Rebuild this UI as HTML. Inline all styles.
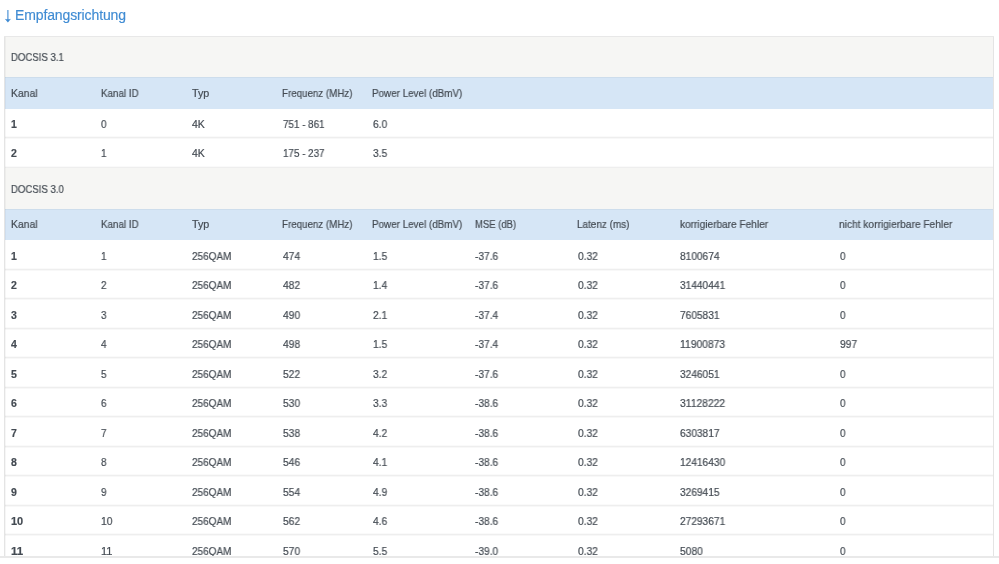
<!DOCTYPE html>
<html><head><meta charset="utf-8"><style>
html,body{margin:0;padding:0;background:#fff;width:999px;height:564px;overflow:hidden;}
body{position:relative;font-family:"Liberation Sans",sans-serif;}
.t{position:absolute;height:20px;line-height:20px;font-size:10.5px;color:#444b53;white-space:nowrap;will-change:transform;-webkit-text-stroke:0.2px #444b53;}
.title{position:absolute;left:14.6px;top:4.6px;font-size:14px;color:#3f8bd3;line-height:20px;white-space:nowrap;letter-spacing:-0.121px;will-change:transform;-webkit-text-stroke:0.15px #3f8bd3;}
</style></head><body>
<svg style="position:absolute;left:0;top:0" width="20" height="30" viewBox="0 0 20 30"><path d="M7.9 10 V20" stroke="#3f8bd3" stroke-width="1.1" fill="none"/><path d="M4.8 18.7 Q7.9 19.9 11 18.7 L7.9 22.5 Z" fill="#3f8bd3"/></svg>
<div class="title">Empfangsrichtung</div>
<div style="position:absolute;left:4px;top:36.00px;width:990px;height:41.4px;background:#f6f6f4;"></div>
<div style="position:absolute;left:4px;top:77.40px;width:990px;height:31.3px;background:#d6e6f6;"></div>
<div style="position:absolute;left:4px;top:76.90px;width:990px;height:1px;background:rgba(0,0,0,0.04);"></div>
<div style="position:absolute;left:4px;top:136.00px;width:990px;height:1px;background:#fafafa;"></div>
<div style="position:absolute;left:4px;top:137.00px;width:990px;height:1px;background:#eeeeee;"></div>
<div style="position:absolute;left:4px;top:138.00px;width:990px;height:1px;background:#f8f8f8;"></div>
<div style="position:absolute;left:4px;top:166.00px;width:990px;height:1px;background:#fafafa;"></div>
<div style="position:absolute;left:4px;top:167.00px;width:990px;height:1px;background:#eeeeee;"></div>
<div style="position:absolute;left:4px;top:168.00px;width:990px;height:1px;background:#f8f8f8;"></div>
<div style="position:absolute;left:4px;top:167.70px;width:990px;height:41.4px;background:#f6f6f4;"></div>
<div style="position:absolute;left:4px;top:209.10px;width:990px;height:31.3px;background:#d6e6f6;"></div>
<div style="position:absolute;left:4px;top:208.60px;width:990px;height:1px;background:rgba(0,0,0,0.04);"></div>
<div style="position:absolute;left:4px;top:268.00px;width:990px;height:1px;background:#fafafa;"></div>
<div style="position:absolute;left:4px;top:269.00px;width:990px;height:1px;background:#eeeeee;"></div>
<div style="position:absolute;left:4px;top:270.00px;width:990px;height:1px;background:#f8f8f8;"></div>
<div style="position:absolute;left:4px;top:297.00px;width:990px;height:1px;background:#fafafa;"></div>
<div style="position:absolute;left:4px;top:298.00px;width:990px;height:1px;background:#eeeeee;"></div>
<div style="position:absolute;left:4px;top:299.00px;width:990px;height:1px;background:#f8f8f8;"></div>
<div style="position:absolute;left:4px;top:327.00px;width:990px;height:1px;background:#fafafa;"></div>
<div style="position:absolute;left:4px;top:328.00px;width:990px;height:1px;background:#eeeeee;"></div>
<div style="position:absolute;left:4px;top:329.00px;width:990px;height:1px;background:#f8f8f8;"></div>
<div style="position:absolute;left:4px;top:356.00px;width:990px;height:1px;background:#fafafa;"></div>
<div style="position:absolute;left:4px;top:357.00px;width:990px;height:1px;background:#eeeeee;"></div>
<div style="position:absolute;left:4px;top:358.00px;width:990px;height:1px;background:#f8f8f8;"></div>
<div style="position:absolute;left:4px;top:386.00px;width:990px;height:1px;background:#fafafa;"></div>
<div style="position:absolute;left:4px;top:387.00px;width:990px;height:1px;background:#eeeeee;"></div>
<div style="position:absolute;left:4px;top:388.00px;width:990px;height:1px;background:#f8f8f8;"></div>
<div style="position:absolute;left:4px;top:415.00px;width:990px;height:1px;background:#fafafa;"></div>
<div style="position:absolute;left:4px;top:416.00px;width:990px;height:1px;background:#eeeeee;"></div>
<div style="position:absolute;left:4px;top:417.00px;width:990px;height:1px;background:#f8f8f8;"></div>
<div style="position:absolute;left:4px;top:445.00px;width:990px;height:1px;background:#fafafa;"></div>
<div style="position:absolute;left:4px;top:446.00px;width:990px;height:1px;background:#eeeeee;"></div>
<div style="position:absolute;left:4px;top:447.00px;width:990px;height:1px;background:#f8f8f8;"></div>
<div style="position:absolute;left:4px;top:474.00px;width:990px;height:1px;background:#fafafa;"></div>
<div style="position:absolute;left:4px;top:475.00px;width:990px;height:1px;background:#eeeeee;"></div>
<div style="position:absolute;left:4px;top:476.00px;width:990px;height:1px;background:#f8f8f8;"></div>
<div style="position:absolute;left:4px;top:504.00px;width:990px;height:1px;background:#fafafa;"></div>
<div style="position:absolute;left:4px;top:505.00px;width:990px;height:1px;background:#eeeeee;"></div>
<div style="position:absolute;left:4px;top:506.00px;width:990px;height:1px;background:#f8f8f8;"></div>
<div style="position:absolute;left:4px;top:533.00px;width:990px;height:1px;background:#fafafa;"></div>
<div style="position:absolute;left:4px;top:534.00px;width:990px;height:1px;background:#eeeeee;"></div>
<div style="position:absolute;left:4px;top:535.00px;width:990px;height:1px;background:#f8f8f8;"></div>
<div style="position:absolute;left:4px;top:563.00px;width:990px;height:1px;background:#fafafa;"></div>
<div style="position:absolute;left:4px;top:564.00px;width:990px;height:1px;background:#eeeeee;"></div>
<div style="position:absolute;left:4px;top:565.00px;width:990px;height:1px;background:#f8f8f8;"></div>
<div class="t" style="left:10.50px;top:46.80px;transform:scaleX(0.9140);transform-origin:0 0">DOCSIS 3.1</div>
<div class="t" style="left:10.50px;top:82.65px;transform:scaleX(0.9874);transform-origin:0 0">Kanal</div>
<div class="t" style="left:100.50px;top:82.65px;transform:scaleX(0.9336);transform-origin:0 0">Kanal ID</div>
<div class="t" style="left:191.50px;top:82.65px;transform:scaleX(1.0234);transform-origin:0 0">Typ</div>
<div class="t" style="left:281.60px;top:82.65px;transform:scaleX(0.9294);transform-origin:0 0">Frequenz (MHz)</div>
<div class="t" style="left:372.10px;top:82.65px;transform:scaleX(0.9383);transform-origin:0 0">Power Level (dBmV)</div>
<div class="t" style="left:10.50px;top:113.85px;font-weight:bold;-webkit-text-stroke:0.18px #444b53;transform:scaleX(1.0019);transform-origin:0 0">1</div>
<div class="t" style="left:100.50px;top:113.85px;transform:scaleX(0.9458);transform-origin:0 0">0</div>
<div class="t" style="left:191.50px;top:113.85px;transform:scaleX(0.9953);transform-origin:0 0">4K</div>
<div class="t" style="left:282.50px;top:113.85px;transform:scaleX(0.9360);transform-origin:0 0">751 - 861</div>
<div class="t" style="left:372.50px;top:113.85px;transform:scaleX(0.9716);transform-origin:0 0">6.0</div>
<div class="t" style="left:10.50px;top:143.35px;font-weight:bold;-webkit-text-stroke:0.18px #444b53;transform:scaleX(1.0019);transform-origin:0 0">2</div>
<div class="t" style="left:100.50px;top:143.35px;transform:scaleX(0.9458);transform-origin:0 0">1</div>
<div class="t" style="left:191.50px;top:143.35px;transform:scaleX(0.9953);transform-origin:0 0">4K</div>
<div class="t" style="left:282.50px;top:143.35px;transform:scaleX(0.9360);transform-origin:0 0">175 - 237</div>
<div class="t" style="left:372.50px;top:143.35px;transform:scaleX(0.9716);transform-origin:0 0">3.5</div>
<div class="t" style="left:10.50px;top:178.50px;transform:scaleX(0.9140);transform-origin:0 0">DOCSIS 3.0</div>
<div class="t" style="left:10.50px;top:214.35px;transform:scaleX(0.9874);transform-origin:0 0">Kanal</div>
<div class="t" style="left:100.50px;top:214.35px;transform:scaleX(0.9336);transform-origin:0 0">Kanal ID</div>
<div class="t" style="left:191.50px;top:214.35px;transform:scaleX(1.0234);transform-origin:0 0">Typ</div>
<div class="t" style="left:281.60px;top:214.35px;transform:scaleX(0.9294);transform-origin:0 0">Frequenz (MHz)</div>
<div class="t" style="left:372.10px;top:214.35px;transform:scaleX(0.9383);transform-origin:0 0">Power Level (dBmV)</div>
<div class="t" style="left:474.50px;top:214.35px;transform:scaleX(0.9022);transform-origin:0 0">MSE (dB)</div>
<div class="t" style="left:576.60px;top:214.35px;transform:scaleX(0.9457);transform-origin:0 0">Latenz (ms)</div>
<div class="t" style="left:679.50px;top:214.35px;transform:scaleX(0.9621);transform-origin:0 0">korrigierbare Fehler</div>
<div class="t" style="left:839.20px;top:214.35px;transform:scaleX(0.9704);transform-origin:0 0">nicht korrigierbare Fehler</div>
<div class="t" style="left:10.50px;top:245.55px;font-weight:bold;-webkit-text-stroke:0.18px #444b53;transform:scaleX(1.0019);transform-origin:0 0">1</div>
<div class="t" style="left:100.50px;top:245.55px;transform:scaleX(0.9458);transform-origin:0 0">1</div>
<div class="t" style="left:191.50px;top:245.55px;transform:scaleX(0.9492);transform-origin:0 0">256QAM</div>
<div class="t" style="left:282.50px;top:245.55px;transform:scaleX(0.9734);transform-origin:0 0">474</div>
<div class="t" style="left:372.50px;top:245.55px;transform:scaleX(0.9716);transform-origin:0 0">1.5</div>
<div class="t" style="left:474.50px;top:245.55px;transform:scaleX(0.9691);transform-origin:0 0">-37.6</div>
<div class="t" style="left:577.50px;top:245.55px;transform:scaleX(0.9730);transform-origin:0 0">0.32</div>
<div class="t" style="left:679.50px;top:245.55px;transform:scaleX(0.9675);transform-origin:0 0">8100674</div>
<div class="t" style="left:839.50px;top:245.55px;transform:scaleX(0.9458);transform-origin:0 0">0</div>
<div class="t" style="left:10.50px;top:275.05px;font-weight:bold;-webkit-text-stroke:0.18px #444b53;transform:scaleX(1.0019);transform-origin:0 0">2</div>
<div class="t" style="left:100.50px;top:275.05px;transform:scaleX(0.9458);transform-origin:0 0">2</div>
<div class="t" style="left:191.50px;top:275.05px;transform:scaleX(0.9492);transform-origin:0 0">256QAM</div>
<div class="t" style="left:282.50px;top:275.05px;transform:scaleX(0.9734);transform-origin:0 0">482</div>
<div class="t" style="left:372.50px;top:275.05px;transform:scaleX(0.9716);transform-origin:0 0">1.4</div>
<div class="t" style="left:474.50px;top:275.05px;transform:scaleX(0.9691);transform-origin:0 0">-37.6</div>
<div class="t" style="left:577.50px;top:275.05px;transform:scaleX(0.9730);transform-origin:0 0">0.32</div>
<div class="t" style="left:679.50px;top:275.05px;transform:scaleX(0.9660);transform-origin:0 0">31440441</div>
<div class="t" style="left:839.50px;top:275.05px;transform:scaleX(0.9458);transform-origin:0 0">0</div>
<div class="t" style="left:10.50px;top:304.55px;font-weight:bold;-webkit-text-stroke:0.18px #444b53;transform:scaleX(1.0019);transform-origin:0 0">3</div>
<div class="t" style="left:100.50px;top:304.55px;transform:scaleX(0.9458);transform-origin:0 0">3</div>
<div class="t" style="left:191.50px;top:304.55px;transform:scaleX(0.9492);transform-origin:0 0">256QAM</div>
<div class="t" style="left:282.50px;top:304.55px;transform:scaleX(0.9734);transform-origin:0 0">490</div>
<div class="t" style="left:372.50px;top:304.55px;transform:scaleX(0.9716);transform-origin:0 0">2.1</div>
<div class="t" style="left:474.50px;top:304.55px;transform:scaleX(0.9691);transform-origin:0 0">-37.4</div>
<div class="t" style="left:577.50px;top:304.55px;transform:scaleX(0.9730);transform-origin:0 0">0.32</div>
<div class="t" style="left:679.50px;top:304.55px;transform:scaleX(0.9675);transform-origin:0 0">7605831</div>
<div class="t" style="left:839.50px;top:304.55px;transform:scaleX(0.9458);transform-origin:0 0">0</div>
<div class="t" style="left:10.50px;top:334.05px;font-weight:bold;-webkit-text-stroke:0.18px #444b53;transform:scaleX(1.0019);transform-origin:0 0">4</div>
<div class="t" style="left:100.50px;top:334.05px;transform:scaleX(0.9458);transform-origin:0 0">4</div>
<div class="t" style="left:191.50px;top:334.05px;transform:scaleX(0.9492);transform-origin:0 0">256QAM</div>
<div class="t" style="left:282.50px;top:334.05px;transform:scaleX(0.9734);transform-origin:0 0">498</div>
<div class="t" style="left:372.50px;top:334.05px;transform:scaleX(0.9716);transform-origin:0 0">1.5</div>
<div class="t" style="left:474.50px;top:334.05px;transform:scaleX(0.9691);transform-origin:0 0">-37.4</div>
<div class="t" style="left:577.50px;top:334.05px;transform:scaleX(0.9730);transform-origin:0 0">0.32</div>
<div class="t" style="left:679.50px;top:334.05px;transform:scaleX(0.9825);transform-origin:0 0">11900873</div>
<div class="t" style="left:839.50px;top:334.05px;transform:scaleX(0.9734);transform-origin:0 0">997</div>
<div class="t" style="left:10.50px;top:363.55px;font-weight:bold;-webkit-text-stroke:0.18px #444b53;transform:scaleX(1.0019);transform-origin:0 0">5</div>
<div class="t" style="left:100.50px;top:363.55px;transform:scaleX(0.9458);transform-origin:0 0">5</div>
<div class="t" style="left:191.50px;top:363.55px;transform:scaleX(0.9492);transform-origin:0 0">256QAM</div>
<div class="t" style="left:282.50px;top:363.55px;transform:scaleX(0.9734);transform-origin:0 0">522</div>
<div class="t" style="left:372.50px;top:363.55px;transform:scaleX(0.9716);transform-origin:0 0">3.2</div>
<div class="t" style="left:474.50px;top:363.55px;transform:scaleX(0.9691);transform-origin:0 0">-37.6</div>
<div class="t" style="left:577.50px;top:363.55px;transform:scaleX(0.9730);transform-origin:0 0">0.32</div>
<div class="t" style="left:679.50px;top:363.55px;transform:scaleX(0.9675);transform-origin:0 0">3246051</div>
<div class="t" style="left:839.50px;top:363.55px;transform:scaleX(0.9458);transform-origin:0 0">0</div>
<div class="t" style="left:10.50px;top:393.05px;font-weight:bold;-webkit-text-stroke:0.18px #444b53;transform:scaleX(1.0019);transform-origin:0 0">6</div>
<div class="t" style="left:100.50px;top:393.05px;transform:scaleX(0.9458);transform-origin:0 0">6</div>
<div class="t" style="left:191.50px;top:393.05px;transform:scaleX(0.9492);transform-origin:0 0">256QAM</div>
<div class="t" style="left:282.50px;top:393.05px;transform:scaleX(0.9734);transform-origin:0 0">530</div>
<div class="t" style="left:372.50px;top:393.05px;transform:scaleX(0.9716);transform-origin:0 0">3.3</div>
<div class="t" style="left:474.50px;top:393.05px;transform:scaleX(0.9691);transform-origin:0 0">-38.6</div>
<div class="t" style="left:577.50px;top:393.05px;transform:scaleX(0.9730);transform-origin:0 0">0.32</div>
<div class="t" style="left:679.50px;top:393.05px;transform:scaleX(0.9825);transform-origin:0 0">31128222</div>
<div class="t" style="left:839.50px;top:393.05px;transform:scaleX(0.9458);transform-origin:0 0">0</div>
<div class="t" style="left:10.50px;top:422.55px;font-weight:bold;-webkit-text-stroke:0.18px #444b53;transform:scaleX(1.0019);transform-origin:0 0">7</div>
<div class="t" style="left:100.50px;top:422.55px;transform:scaleX(0.9458);transform-origin:0 0">7</div>
<div class="t" style="left:191.50px;top:422.55px;transform:scaleX(0.9492);transform-origin:0 0">256QAM</div>
<div class="t" style="left:282.50px;top:422.55px;transform:scaleX(0.9734);transform-origin:0 0">538</div>
<div class="t" style="left:372.50px;top:422.55px;transform:scaleX(0.9716);transform-origin:0 0">4.2</div>
<div class="t" style="left:474.50px;top:422.55px;transform:scaleX(0.9691);transform-origin:0 0">-38.6</div>
<div class="t" style="left:577.50px;top:422.55px;transform:scaleX(0.9730);transform-origin:0 0">0.32</div>
<div class="t" style="left:679.50px;top:422.55px;transform:scaleX(0.9675);transform-origin:0 0">6303817</div>
<div class="t" style="left:839.50px;top:422.55px;transform:scaleX(0.9458);transform-origin:0 0">0</div>
<div class="t" style="left:10.50px;top:452.05px;font-weight:bold;-webkit-text-stroke:0.18px #444b53;transform:scaleX(1.0019);transform-origin:0 0">8</div>
<div class="t" style="left:100.50px;top:452.05px;transform:scaleX(0.9458);transform-origin:0 0">8</div>
<div class="t" style="left:191.50px;top:452.05px;transform:scaleX(0.9492);transform-origin:0 0">256QAM</div>
<div class="t" style="left:282.50px;top:452.05px;transform:scaleX(0.9734);transform-origin:0 0">546</div>
<div class="t" style="left:372.50px;top:452.05px;transform:scaleX(0.9716);transform-origin:0 0">4.1</div>
<div class="t" style="left:474.50px;top:452.05px;transform:scaleX(0.9691);transform-origin:0 0">-38.6</div>
<div class="t" style="left:577.50px;top:452.05px;transform:scaleX(0.9730);transform-origin:0 0">0.32</div>
<div class="t" style="left:679.50px;top:452.05px;transform:scaleX(0.9660);transform-origin:0 0">12416430</div>
<div class="t" style="left:839.50px;top:452.05px;transform:scaleX(0.9458);transform-origin:0 0">0</div>
<div class="t" style="left:10.50px;top:481.55px;font-weight:bold;-webkit-text-stroke:0.18px #444b53;transform:scaleX(1.0019);transform-origin:0 0">9</div>
<div class="t" style="left:100.50px;top:481.55px;transform:scaleX(0.9458);transform-origin:0 0">9</div>
<div class="t" style="left:191.50px;top:481.55px;transform:scaleX(0.9492);transform-origin:0 0">256QAM</div>
<div class="t" style="left:282.50px;top:481.55px;transform:scaleX(0.9734);transform-origin:0 0">554</div>
<div class="t" style="left:372.50px;top:481.55px;transform:scaleX(0.9716);transform-origin:0 0">4.9</div>
<div class="t" style="left:474.50px;top:481.55px;transform:scaleX(0.9691);transform-origin:0 0">-38.6</div>
<div class="t" style="left:577.50px;top:481.55px;transform:scaleX(0.9730);transform-origin:0 0">0.32</div>
<div class="t" style="left:679.50px;top:481.55px;transform:scaleX(0.9675);transform-origin:0 0">3269415</div>
<div class="t" style="left:839.50px;top:481.55px;transform:scaleX(0.9458);transform-origin:0 0">0</div>
<div class="t" style="left:10.50px;top:511.05px;font-weight:bold;-webkit-text-stroke:0.18px #444b53;transform:scaleX(1.0447);transform-origin:0 0">10</div>
<div class="t" style="left:100.50px;top:511.05px;transform:scaleX(0.9872);transform-origin:0 0">10</div>
<div class="t" style="left:191.50px;top:511.05px;transform:scaleX(0.9492);transform-origin:0 0">256QAM</div>
<div class="t" style="left:282.50px;top:511.05px;transform:scaleX(0.9734);transform-origin:0 0">562</div>
<div class="t" style="left:372.50px;top:511.05px;transform:scaleX(0.9716);transform-origin:0 0">4.6</div>
<div class="t" style="left:474.50px;top:511.05px;transform:scaleX(0.9691);transform-origin:0 0">-38.6</div>
<div class="t" style="left:577.50px;top:511.05px;transform:scaleX(0.9730);transform-origin:0 0">0.32</div>
<div class="t" style="left:679.50px;top:511.05px;transform:scaleX(0.9660);transform-origin:0 0">27293671</div>
<div class="t" style="left:839.50px;top:511.05px;transform:scaleX(0.9458);transform-origin:0 0">0</div>
<div class="t" style="left:10.50px;top:540.55px;font-weight:bold;-webkit-text-stroke:0.18px #444b53;transform:scaleX(1.0991);transform-origin:0 0">11</div>
<div class="t" style="left:100.50px;top:540.55px;transform:scaleX(1.0579);transform-origin:0 0">11</div>
<div class="t" style="left:191.50px;top:540.55px;transform:scaleX(0.9492);transform-origin:0 0">256QAM</div>
<div class="t" style="left:282.50px;top:540.55px;transform:scaleX(0.9734);transform-origin:0 0">570</div>
<div class="t" style="left:372.50px;top:540.55px;transform:scaleX(0.9716);transform-origin:0 0">5.5</div>
<div class="t" style="left:474.50px;top:540.55px;transform:scaleX(0.9691);transform-origin:0 0">-39.0</div>
<div class="t" style="left:577.50px;top:540.55px;transform:scaleX(0.9730);transform-origin:0 0">0.32</div>
<div class="t" style="left:679.50px;top:540.55px;transform:scaleX(0.9767);transform-origin:0 0">5080</div>
<div class="t" style="left:839.50px;top:540.55px;transform:scaleX(0.9458);transform-origin:0 0">0</div>
<div style="position:absolute;left:4px;top:36px;width:1px;height:521px;background:#e4e4e4;"></div>
<div style="position:absolute;left:5px;top:36px;width:1px;height:521px;background:rgba(0,0,0,0.035);"></div>
<div style="position:absolute;left:993px;top:36px;width:1px;height:521px;background:#e4e4e4;"></div>
<div style="position:absolute;left:4px;top:36px;width:990px;height:1px;background:#e8e8e8;"></div>
<div style="position:absolute;left:0;top:556px;width:999px;height:8px;background:#fff;"></div><div style="position:absolute;left:0;top:556.2px;width:999px;height:1.6px;background:#e9e9e9;"></div>
</body></html>
